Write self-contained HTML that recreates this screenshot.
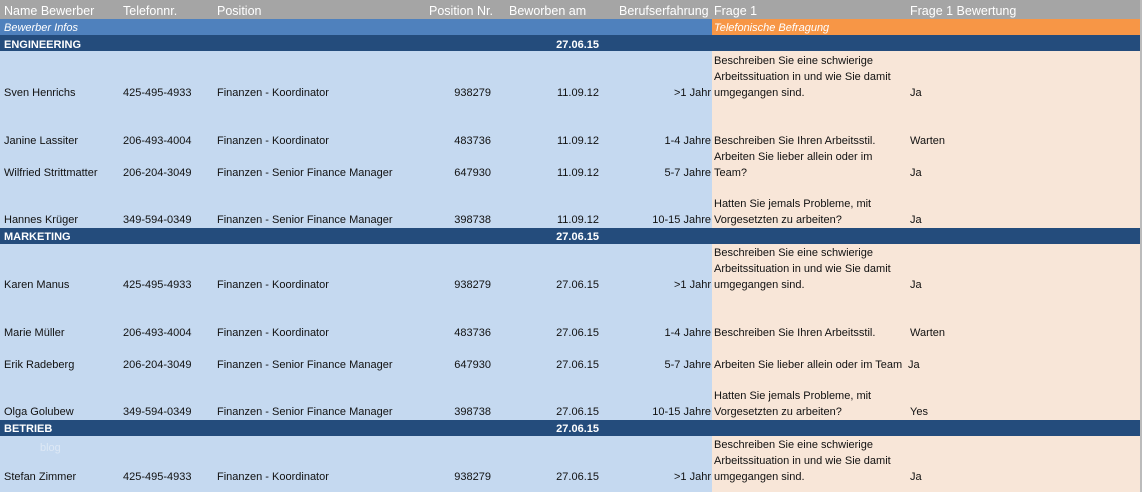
<!DOCTYPE html>
<html><head><meta charset="utf-8">
<style>
*{margin:0;padding:0;box-sizing:border-box}
html,body{width:1142px;height:492px;overflow:hidden}
body{position:relative;background:#fff;font-family:"Liberation Sans",sans-serif;font-size:11px;color:#111}
.b{position:absolute}
.t{position:absolute;line-height:14px;white-space:nowrap;margin-top:1px}
.r{text-align:right}
.w{color:#fff}
.h{font-size:12.5px;color:#fff}
</style></head><body>
<div class="b" style="left:0;top:0;width:1140px;height:19px;background:#a5a5a5"></div>
<div class="b" style="left:0;top:19px;width:712px;height:16px;background:#4f81bd"></div>
<div class="b" style="left:712px;top:19px;width:428px;height:16px;background:#f79646"></div>
<div class="b" style="left:0;top:35px;width:712px;height:457px;background:#c5d9f0"></div>
<div class="b" style="left:712px;top:35px;width:428px;height:457px;background:#f8e6d8"></div>
<div class="b" style="left:0;top:35px;width:1140px;height:16px;background:#244c7c"></div>
<div class="b" style="left:0;top:228px;width:1140px;height:16px;background:#244c7c"></div>
<div class="b" style="left:0;top:420px;width:1140px;height:16px;background:#244c7c"></div>
<div class="b" style="left:1140px;top:0;width:2px;height:492px;background:#bbb"></div>

<div class="t h" style="left:4px;top:3px">Name Bewerber</div>
<div class="t h" style="left:123px;top:3px">Telefonnr.</div>
<div class="t h" style="left:217px;top:3px">Position</div>
<div class="t h" style="left:429px;top:3px">Position Nr.</div>
<div class="t h" style="left:509px;top:3px">Beworben am</div>
<div class="t h" style="left:619px;top:3px">Berufserfahrung</div>
<div class="t h" style="left:714px;top:3px">Frage 1</div>
<div class="t h" style="left:910px;top:3px">Frage 1 Bewertung</div>
<div class="t w" style="left:4px;top:20px;font-style:italic">Bewerber Infos</div>
<div class="t w" style="left:714px;top:20px;font-style:italic">Telefonische Befragung</div>

<div class="t w" style="left:4px;top:37px;font-weight:bold">ENGINEERING</div>
<div class="t w r" style="left:500px;width:99px;top:37px;font-weight:bold">27.06.15</div>
<div class="t w" style="left:4px;top:229px;font-weight:bold">MARKETING</div>
<div class="t w r" style="left:500px;width:99px;top:229px;font-weight:bold">27.06.15</div>
<div class="t w" style="left:4px;top:421px;font-weight:bold">BETRIEB</div>
<div class="t w r" style="left:500px;width:99px;top:421px;font-weight:bold">27.06.15</div>
<div class="t" style="left:40px;top:440px;color:#dde8f5">blog</div>

<div class="t" style="left:4px;top:85px">Sven Henrichs</div><div class="t" style="left:123px;top:85px">425-495-4933</div><div class="t" style="left:217px;top:85px">Finanzen - Koordinator</div><div class="t r" style="left:400px;width:91px;top:85px">938279</div><div class="t r" style="left:500px;width:99px;top:85px">11.09.12</div><div class="t r" style="left:600px;width:111px;top:85px">&gt;1 Jahr</div>
<div class="t" style="left:714px;top:53px">Beschreiben Sie eine schwierige</div><div class="t" style="left:714px;top:69px">Arbeitssituation in und wie Sie damit</div><div class="t" style="left:714px;top:85px">umgegangen sind.</div><div class="t" style="left:910px;top:85px">Ja</div>

<div class="t" style="left:4px;top:133px">Janine Lassiter</div><div class="t" style="left:123px;top:133px">206-493-4004</div><div class="t" style="left:217px;top:133px">Finanzen - Koordinator</div><div class="t r" style="left:400px;width:91px;top:133px">483736</div><div class="t r" style="left:500px;width:99px;top:133px">11.09.12</div><div class="t r" style="left:600px;width:111px;top:133px">1-4 Jahre</div>
<div class="t" style="left:714px;top:133px">Beschreiben Sie Ihren Arbeitsstil.</div><div class="t" style="left:910px;top:133px">Warten</div>

<div class="t" style="left:4px;top:165px">Wilfried Strittmatter</div><div class="t" style="left:123px;top:165px">206-204-3049</div><div class="t" style="left:217px;top:165px">Finanzen - Senior Finance Manager</div><div class="t r" style="left:400px;width:91px;top:165px">647930</div><div class="t r" style="left:500px;width:99px;top:165px">11.09.12</div><div class="t r" style="left:600px;width:111px;top:165px">5-7 Jahre</div>
<div class="t" style="left:714px;top:149px">Arbeiten Sie lieber allein oder im</div><div class="t" style="left:714px;top:165px">Team?</div><div class="t" style="left:910px;top:165px">Ja</div>

<div class="t" style="left:4px;top:212px">Hannes Krüger</div><div class="t" style="left:123px;top:212px">349-594-0349</div><div class="t" style="left:217px;top:212px">Finanzen - Senior Finance Manager</div><div class="t r" style="left:400px;width:91px;top:212px">398738</div><div class="t r" style="left:500px;width:99px;top:212px">11.09.12</div><div class="t r" style="left:600px;width:111px;top:212px">10-15 Jahre</div>
<div class="t" style="left:714px;top:196px">Hatten Sie jemals Probleme, mit</div><div class="t" style="left:714px;top:212px">Vorgesetzten zu arbeiten?</div><div class="t" style="left:910px;top:212px">Ja</div>

<div class="t" style="left:4px;top:277px">Karen Manus</div><div class="t" style="left:123px;top:277px">425-495-4933</div><div class="t" style="left:217px;top:277px">Finanzen - Koordinator</div><div class="t r" style="left:400px;width:91px;top:277px">938279</div><div class="t r" style="left:500px;width:99px;top:277px">27.06.15</div><div class="t r" style="left:600px;width:111px;top:277px">&gt;1 Jahr</div>
<div class="t" style="left:714px;top:245px">Beschreiben Sie eine schwierige</div><div class="t" style="left:714px;top:261px">Arbeitssituation in und wie Sie damit</div><div class="t" style="left:714px;top:277px">umgegangen sind.</div><div class="t" style="left:910px;top:277px">Ja</div>

<div class="t" style="left:4px;top:325px">Marie Müller</div><div class="t" style="left:123px;top:325px">206-493-4004</div><div class="t" style="left:217px;top:325px">Finanzen - Koordinator</div><div class="t r" style="left:400px;width:91px;top:325px">483736</div><div class="t r" style="left:500px;width:99px;top:325px">27.06.15</div><div class="t r" style="left:600px;width:111px;top:325px">1-4 Jahre</div>
<div class="t" style="left:714px;top:325px">Beschreiben Sie Ihren Arbeitsstil.</div><div class="t" style="left:910px;top:325px">Warten</div>

<div class="t" style="left:4px;top:357px">Erik Radeberg</div><div class="t" style="left:123px;top:357px">206-204-3049</div><div class="t" style="left:217px;top:357px">Finanzen - Senior Finance Manager</div><div class="t r" style="left:400px;width:91px;top:357px">647930</div><div class="t r" style="left:500px;width:99px;top:357px">27.06.15</div><div class="t r" style="left:600px;width:111px;top:357px">5-7 Jahre</div>
<div class="t" style="left:714px;top:357px">Arbeiten Sie lieber allein oder im Team</div><div class="t" style="left:908px;top:357px">Ja</div>

<div class="t" style="left:4px;top:404px">Olga Golubew</div><div class="t" style="left:123px;top:404px">349-594-0349</div><div class="t" style="left:217px;top:404px">Finanzen - Senior Finance Manager</div><div class="t r" style="left:400px;width:91px;top:404px">398738</div><div class="t r" style="left:500px;width:99px;top:404px">27.06.15</div><div class="t r" style="left:600px;width:111px;top:404px">10-15 Jahre</div>
<div class="t" style="left:714px;top:388px">Hatten Sie jemals Probleme, mit</div><div class="t" style="left:714px;top:404px">Vorgesetzten zu arbeiten?</div><div class="t" style="left:910px;top:404px">Yes</div>

<div class="t" style="left:4px;top:469px">Stefan Zimmer</div><div class="t" style="left:123px;top:469px">425-495-4933</div><div class="t" style="left:217px;top:469px">Finanzen - Koordinator</div><div class="t r" style="left:400px;width:91px;top:469px">938279</div><div class="t r" style="left:500px;width:99px;top:469px">27.06.15</div><div class="t r" style="left:600px;width:111px;top:469px">&gt;1 Jahr</div>
<div class="t" style="left:714px;top:437px">Beschreiben Sie eine schwierige</div><div class="t" style="left:714px;top:453px">Arbeitssituation in und wie Sie damit</div><div class="t" style="left:714px;top:469px">umgegangen sind.</div><div class="t" style="left:910px;top:469px">Ja</div>
</body></html>
